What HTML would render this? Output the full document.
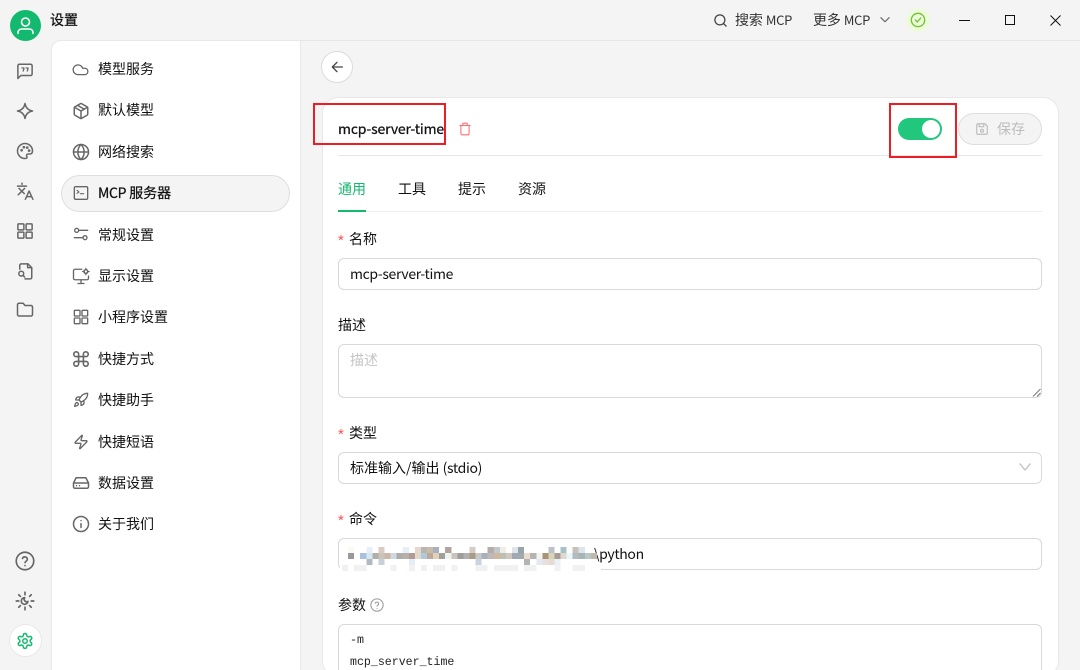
<!DOCTYPE html>
<html><head><meta charset="utf-8">
<style>
*{box-sizing:border-box;margin:0;padding:0}
html,body{width:1080px;height:670px;overflow:hidden;background:#f4f4f4}
body{position:relative;font-family:"Noto Sans CJK SC","Liberation Sans",sans-serif;font-size:14px;color:#111}
.a{position:absolute;white-space:nowrap}
.t{line-height:20px;height:20px}
.m{-webkit-text-stroke:.25px currentColor}
.l{letter-spacing:-.35px}
svg{position:absolute;fill:none;stroke:#666;stroke-width:2;stroke-linecap:round;stroke-linejoin:round}
.menu{position:absolute;left:51px;top:40px;width:250px;height:630px;background:#fff;border-left:1px solid #e8e8e8;border-top:1px solid #e8e8e8;border-right:1px solid #e8e8e8;border-top-left-radius:10px}
.input{position:absolute;left:338px;width:704px;border:1px solid #d9d9d9;border-radius:6px;background:#fff}
.star{color:#ff4d4f;font-size:15px;line-height:20px;font-family:"Liberation Sans",sans-serif}
</style></head><body>

<!-- top bar -->
<div class="a" style="left:60px;top:40px;width:1020px;height:1px;background:#e6e6e6"></div>
<div class="a" style="left:10px;top:10px;width:31px;height:31px;border-radius:50%;background:#13b96e"></div>
<svg style="left:15px;top:15px;stroke:#fff;stroke-width:1.8" width="21" height="21" viewBox="0 0 24 24"><circle cx="12" cy="8" r="4.6"/><path d="M3.5 21v-1.5a4 4 0 0 1 4-3.5h9a4 4 0 0 1 4 3.5V21"/></svg>
<div class="a t m" style="left:50px;top:10px">设置</div>

<svg style="left:713px;top:13px;stroke:#444" width="15" height="15" viewBox="0 0 24 24"><circle cx="11" cy="11" r="8"/><path d="m21 21-4.3-4.3"/></svg>
<div class="a t" style="left:735px;top:10px;color:#333;letter-spacing:-.1px">搜索 <span style="font-size:13px;letter-spacing:-.3px">MCP</span></div>
<div class="a t" style="left:813px;top:10px;color:#333;letter-spacing:-.1px">更多 <span style="font-size:13px;letter-spacing:-.3px">MCP</span></div>
<svg style="left:878px;top:13px;stroke:#666" width="14" height="14" viewBox="0 0 24 24"><path d="m5 8 7 7 7-7"/></svg>
<div class="a" style="left:906px;top:8px;width:24px;height:24px;border-radius:50%;background:#edfadc"></div>
<svg style="left:910px;top:12px;stroke:#6cc52d" width="16" height="16" viewBox="0 0 24 24"><circle cx="12" cy="12" r="10"/><path d="m8 12 3 3 5-6"/></svg>
<div class="a" style="left:959px;top:20px;width:11px;height:1px;background:#111"></div>
<div class="a" style="left:1005px;top:15px;width:10px;height:10px;border:1.2px solid #111"></div>
<svg style="left:1050px;top:15px;stroke:#111;stroke-width:1;stroke-linecap:butt" width="11" height="11" viewBox="0 0 11 11"><path d="M.5.5l10 10M10.5.5l-10 10"/></svg>

<!-- icon rail -->
<svg style="left:16px;top:62px" width="18" height="18" viewBox="0 0 24 24"><path d="M2.500 22V5a2 2 0 0 1 2-2h15a2 2 0 0 1 2 2v11a2 2 0 0 1-2 2H6.500z"/><path d="M8 8h2.500v1.500L9.500 12M13.500 8H16v1.500L15 12" stroke-width="1.700"/></svg>
<svg style="left:16px;top:102px" width="18" height="18" viewBox="0 0 24 24"><path d="M12 2c1 6 4 9 10 10-6 1-9 4-10 10-1-6-4-9-10-10 6-1 9-4 10-10z"/></svg>
<svg style="left:16px;top:142px" width="18" height="18" viewBox="0 0 24 24"><path d="M12 22a10 10 0 1 1 10-10c0 3-2 4-4 4h-2a2 2 0 0 0-1.500 3.300c.8 1 .2 2.700-2.500 2.700z"/><circle cx="7.500" cy="11" r=".8"/><circle cx="10.500" cy="7" r=".8"/><circle cx="15" cy="7.500" r=".8"/><circle cx="17.500" cy="11.500" r=".8"/></svg>
<svg style="left:16px;top:182px" width="18" height="18" viewBox="0 0 24 24"><path d="M8 1.500v1.500M2 5.500h12M4 8.500l7 7M11.500 8.500 3 17M12.500 23l5-11 5 11M14 19.500h7"/></svg>
<svg style="left:16px;top:222px" width="18" height="18" viewBox="0 0 24 24"><rect x="2.500" y="2.500" width="8" height="8" rx="1"/><rect x="13.500" y="2.500" width="8" height="8" rx="1"/><rect x="2.500" y="13.500" width="8" height="8" rx="1"/><rect x="13.500" y="13.500" width="8" height="8" rx="1"/></svg>
<svg style="left:16px;top:262px" width="18" height="18" viewBox="0 0 24 24"><path d="M5 9.500V4.500a2 2 0 0 1 2-2h9l5 5v13a2 2 0 0 1-2 2h-7"/><path d="M15.500 2.500v5h5.500"/><circle cx="7" cy="15.500" r="3.200"/><path d="m9.500 18 2 2"/></svg>
<svg style="left:16px;top:301px" width="18" height="18" viewBox="0 0 24 24"><path d="M4 20h16a2 2 0 0 0 2-2V8a2 2 0 0 0-2-2h-8L9.500 3H4a2 2 0 0 0-2 2v13a2 2 0 0 0 2 2z"/></svg>
<svg style="left:15px;top:551px" width="20" height="20" viewBox="0 0 24 24"><circle cx="12" cy="12" r="10.500"/><path d="M9 9a3 3 0 0 1 5.800 1c0 2-2.800 2.500-2.800 4"/><path d="M12 17.500h.01"/></svg>
<svg style="left:15px;top:591px" width="20" height="20" viewBox="0 0 24 24"><path d="M12 1.500v3M12 19.500v3M1.500 12h3M19.500 12h3M4.500 4.500l2 2M17.500 17.500l2 2M4.500 19.500l2-2M17.500 6.500l2-2"/><path d="M15.500 12.500a4 4 0 1 1-3.800-4.500 3 3 0 0 0 3.800 4.500z"/></svg>
<div class="a" style="left:9px;top:624px;width:33px;height:33px;border-radius:50%;background:#fff;border:1px solid #e8e8e8"></div>
<svg style="left:16px;top:632px;stroke:#13b96e" width="18" height="18" viewBox="0 0 24 24"><path d="M12.200 2h-.4a2 2 0 0 0-2 2v.2a2 2 0 0 1-1 1.700l-.4.300a2 2 0 0 1-2 0l-.2-.1a2 2 0 0 0-2.700.7l-.2.400a2 2 0 0 0 .7 2.700l.2.100a2 2 0 0 1 1 1.700v.5a2 2 0 0 1-1 1.700l-.2.100a2 2 0 0 0-.7 2.700l.2.400a2 2 0 0 0 2.700.7l.2-.1a2 2 0 0 1 2 0l.4.300a2 2 0 0 1 1 1.700v.2a2 2 0 0 0 2 2h.4a2 2 0 0 0 2-2v-.2a2 2 0 0 1 1-1.700l.4-.3a2 2 0 0 1 2 0l.2.100a2 2 0 0 0 2.700-.7l.2-.4a2 2 0 0 0-.7-2.700l-.2-.1a2 2 0 0 1-1-1.700v-.5a2 2 0 0 1 1-1.700l.2-.1a2 2 0 0 0 .7-2.700l-.2-.4a2 2 0 0 0-2.700-.7l-.2.100a2 2 0 0 1-2 0l-.4-.3a2 2 0 0 1-1-1.700V4a2 2 0 0 0-2-2z"/><circle cx="12" cy="12" r="3"/></svg>

<!-- menu panel -->
<div class="menu"></div>
<div class="a" style="left:61px;top:175px;width:229px;height:37px;border-radius:19px;background:#f4f4f4;border:1px solid #dedede"></div>

<svg style="left:72px;top:60px" width="18" height="18" viewBox="0 0 24 24"><path d="M17.500 19.500H8a6.500 6.500 0 1 1 6.200-8.500h3.300a4.300 4.300 0 0 1 0 8.500z" stroke-width="1.700"/></svg>
<div class="a t" style="left:98px;top:59px">模型服务</div>
<svg style="left:72px;top:102px" width="18" height="18" viewBox="0 0 24 24" stroke-width="1.800"><path d="M21 8a2 2 0 0 0-1-1.700l-7-4a2 2 0 0 0-2 0l-7 4A2 2 0 0 0 3 8v8a2 2 0 0 0 1 1.700l7 4a2 2 0 0 0 2 0l7-4a2 2 0 0 0 1-1.700z"/><path d="m3.300 7 8.700 5 8.700-5M12 22V12M7.500 4.500l9 5.200"/></svg>
<div class="a t" style="left:98px;top:100px">默认模型</div>
<svg style="left:72px;top:143px" width="18" height="18" viewBox="0 0 24 24"><circle cx="12" cy="12" r="10"/><path d="M2 12h20M12 2a14 14 0 0 0 0 20 14 14 0 0 0 0-20z"/></svg>
<div class="a t" style="left:98px;top:142px">网络搜索</div>
<svg style="left:73px;top:185px" width="16" height="16" viewBox="0 0 24 24" stroke-width="2"><rect x="2" y="2.500" width="20" height="19" rx="2"/><path d="m6 8 3 2.500L6 12.500M11 13h5" stroke-width="1.600"/></svg>
<div class="a t m" style="left:98px;top:183px;letter-spacing:-.05px"><span class="l">MCP</span> 服务器</div>
<svg style="left:73px;top:226px" width="16" height="16" viewBox="0 0 24 24"><circle cx="5.500" cy="6.500" r="3"/><circle cx="18" cy="17.500" r="3"/><path d="M9 6.500h13M2 17.500h13"/></svg>
<div class="a t" style="left:98px;top:225px">常规设置</div>
<svg style="left:72px;top:267px" width="18" height="18" viewBox="0 0 24 24"><path d="M13 3H4a2 2 0 0 0-2 2v10a2 2 0 0 0 2 2h16a2 2 0 0 0 2-2v-3M12 17v5M8 22h8" stroke-width="1.800"/><circle cx="18.500" cy="6" r="2.500"/><path d="M18.500 1.500v1.500M18.500 9v1.500M14 6h1.500M21.500 6H23" stroke-width="1.500"/></svg>
<div class="a t" style="left:98px;top:266px">显示设置</div>
<svg style="left:73px;top:309px" width="16" height="16" viewBox="0 0 24 24"><rect x="2" y="2" width="8.500" height="8.500" rx="1"/><rect x="13.500" y="2" width="8.500" height="8.500" rx="1"/><rect x="2" y="13.500" width="8.500" height="8.500" rx="1"/><rect x="13.500" y="13.500" width="8.500" height="8.500" rx="1"/></svg>
<div class="a t" style="left:98px;top:307px">小程序设置</div>
<svg style="left:73px;top:351px" width="16" height="16" viewBox="2 2 20 20" stroke-width="2"><path d="M15 6v12a3 3 0 1 0 3-3H6a3 3 0 1 0 3 3V6a3 3 0 1 0-3 3h12a3 3 0 1 0-3-3"/></svg>
<div class="a t" style="left:98px;top:349px">快捷方式</div>
<svg style="left:73px;top:392px" width="16" height="16" viewBox="0 0 24 24"><path d="M4.500 16.500c-1.500 1.300-2 5-2 5s3.700-.5 5-2c.7-.8.700-2.100-.1-2.900a2.200 2.200 0 0 0-2.900-.1z"/><path d="m12 15-3-3a22 22 0 0 1 2-4A12.900 12.900 0 0 1 22 2c0 2.700-.8 7.500-6 11a22.400 22.400 0 0 1-4 2z"/><path d="M9 12H4s.5-3 2-4c1.600-1.100 5 0 5 0M12 15v5s3-.5 4-2c1.100-1.600 0-5 0-5"/></svg>
<div class="a t" style="left:98px;top:390px">快捷助手</div>
<svg style="left:73px;top:434px" width="16" height="16" viewBox="0 0 24 24"><path d="M4 14a1 1 0 0 1-.8-1.600l9.900-10.200a.5.500 0 0 1 .9.500l-1.900 6A1 1 0 0 0 13 10h7a1 1 0 0 1 .8 1.600l-9.900 10.200a.5.500 0 0 1-.9-.5l1.900-6A1 1 0 0 0 11 14z"/></svg>
<div class="a t" style="left:98px;top:432px">快捷短语</div>
<svg style="left:72px;top:474px" width="18" height="18" viewBox="0 0 24 24"><path d="M2 12h20M5.500 5h13L22 12v5a2 2 0 0 1-2 2H4a2 2 0 0 1-2-2v-5z"/><path d="M6 15.500h.01M10 15.500h.01"/></svg>
<div class="a t" style="left:98px;top:473px">数据设置</div>
<svg style="left:72px;top:515px" width="18" height="18" viewBox="0 0 24 24"><circle cx="12" cy="12" r="10"/><path d="M12 16.500v-5M12 7.500h.01"/></svg>
<div class="a t" style="left:98px;top:514px">关于我们</div>

<!-- back button -->
<div class="a" style="left:321px;top:51px;width:32px;height:32px;border-radius:50%;background:#fff;border:1px solid #dcdcdc"></div>
<svg style="left:329px;top:59px;stroke:#444" width="16" height="16" viewBox="0 0 24 24"><path d="M12 19 5 12l7-7M5 12h15"/></svg>

<!-- card -->
<div class="a" style="left:322px;top:97px;width:737px;height:580px;background:#fff;border:1px solid #e8e8e8;border-radius:16px"></div>
<div class="a t m" style="left:338px;top:119px;letter-spacing:-.15px">mcp-server-time</div>
<svg style="left:458px;top:122px;stroke:#ff6b6f;stroke-width:1.800" width="14" height="14" viewBox="0 0 24 24"><path d="M3 6h18M19 6v14a2 2 0 0 1-2 2H7a2 2 0 0 1-2-2V6M8 6V4a2 2 0 0 1 2-2h4a2 2 0 0 1 2 2v2"/></svg>
<div class="a" style="left:898px;top:118px;width:44px;height:22px;border-radius:11px;background:#20c77c"></div>
<div class="a" style="left:922px;top:120px;width:18px;height:18px;border-radius:50%;background:#fff"></div>
<div class="a" style="left:958px;top:113px;width:84px;height:32px;border-radius:16px;background:#f4f4f4;border:1px solid #dedede"></div>
<svg style="left:975px;top:122px;stroke:#bdbdbd" width="14" height="14" viewBox="0 0 24 24"><path d="M5 3h12l4 4v12a2 2 0 0 1-2 2H5a2 2 0 0 1-2-2V5a2 2 0 0 1 2-2z"/><path d="M7 3v5h8V3"/><circle cx="12" cy="15" r="2.500"/></svg>
<div class="a t" style="left:997px;top:119px;color:#bdbdbd">保存</div>
<div class="a" style="left:338px;top:155px;width:704px;height:1px;background:#e6e6e6"></div>

<div class="a t" style="left:338px;top:179px;color:#13b96e">通用</div>
<div class="a t" style="left:398px;top:179px">工具</div>
<div class="a t" style="left:458px;top:179px">提示</div>
<div class="a t" style="left:518px;top:179px">资源</div>
<div class="a" style="left:338px;top:211px;width:704px;height:1px;background:#eee"></div>
<div class="a" style="left:338px;top:210px;width:28px;height:2px;background:#13b96e"></div>

<div class="a star" style="left:338px;top:231px">*</div>
<div class="a t" style="left:349px;top:229px">名称</div>
<div class="input" style="top:258px;height:32px"></div>
<div class="a t l" style="left:350px;top:264px">mcp-server-time</div>

<div class="a t" style="left:338px;top:315px">描述</div>
<div class="input" style="top:344px;height:54px"></div>
<div class="a t" style="left:350px;top:350px;color:#c4c4c4">描述</div>
<svg style="left:1032px;top:388px;stroke:#777;stroke-width:1;stroke-linecap:butt" width="9" height="9" viewBox="0 0 9 9"><path d="M1 8.500 8.500 1M5 8.500 8.500 5"/></svg>

<div class="a star" style="left:338px;top:425px">*</div>
<div class="a t" style="left:349px;top:423px">类型</div>
<div class="input" style="top:452px;height:32px"></div>
<div class="a t" style="left:350px;top:458px">标准输入/输出 <span class="l">(stdio)</span></div>
<svg style="left:1019px;top:461px;stroke:#c8c8c8;stroke-width:1.500" width="12" height="12" viewBox="0 0 12 12"><path d="M1 3l5 6 5-6"/></svg>

<div class="a star" style="left:338px;top:511px">*</div>
<div class="a t" style="left:349px;top:509px">命令</div>
<div class="input" style="top:538px;height:32px"></div>
<div class="a t l" style="left:594px;top:544px">\python</div>
<svg style="position:absolute;left:340px;top:547px;stroke:none;stroke-width:0" width="261" height="24" viewBox="0 0 258 24" preserveAspectRatio="none" shape-rendering="crispEdges">
<g>
<rect x="8" y="0" width="6" height="6" fill="#fbfaf2"/><rect x="26" y="0" width="6" height="6" fill="#e8eef4"/><rect x="38" y="0" width="6" height="6" fill="#d8ccc4"/><rect x="62" y="0" width="6" height="6" fill="#e4f2f8"/><rect x="74" y="0" width="6" height="6" fill="#e2d8d0"/><rect x="80" y="0" width="6" height="6" fill="#b8b4ae"/><rect x="86" y="0" width="6" height="6" fill="#c8bca8"/><rect x="92" y="0" width="6" height="6" fill="#a8b0c0"/><rect x="104" y="0" width="6" height="6" fill="#b0a49c"/><rect x="128" y="0" width="6" height="6" fill="#d4ccc4"/><rect x="146" y="0" width="6" height="6" fill="#b4aca8"/><rect x="152" y="0" width="6" height="6" fill="#c0c8d0"/><rect x="158" y="0" width="6" height="6" fill="#f0eee4"/><rect x="170" y="0" width="6" height="6" fill="#dce4ec"/><rect x="176" y="0" width="6" height="6" fill="#98a4a8"/><rect x="206" y="0" width="6" height="6" fill="#bcc0c8"/><rect x="218" y="0" width="6" height="6" fill="#a8c0c8"/><rect x="230" y="0" width="6" height="6" fill="#c8c0b8"/><rect x="236" y="0" width="6" height="6" fill="#dce4ec"/>
</g>
<g>
<rect x="8" y="6" width="6" height="6" fill="#999"/><rect x="20" y="6" width="6" height="6" fill="#a8c0dc"/><rect x="26" y="6" width="6" height="6" fill="#d4e8f4"/><rect x="32" y="6" width="6" height="6" fill="#b0b0a8"/><rect x="38" y="6" width="6" height="6" fill="#ccc4b8"/><rect x="44" y="6" width="6" height="6" fill="#c8b8a8"/><rect x="50" y="6" width="6" height="6" fill="#d0d8e0"/><rect x="56" y="6" width="6" height="6" fill="#acacac"/><rect x="62" y="6" width="6" height="6" fill="#b8b0a8"/><rect x="68" y="6" width="6" height="6" fill="#b09c94"/><rect x="74" y="6" width="6" height="6" fill="#e4d8c8"/><rect x="80" y="6" width="6" height="6" fill="#b0c8dc"/><rect x="86" y="6" width="6" height="6" fill="#c0a898"/><rect x="92" y="6" width="6" height="6" fill="#e0d0b8"/><rect x="98" y="6" width="6" height="6" fill="#a0a098"/><rect x="104" y="6" width="6" height="6" fill="#f0f4f0"/><rect x="110" y="6" width="6" height="6" fill="#ccc4bc"/><rect x="116" y="6" width="6" height="6" fill="#a09c9c"/><rect x="122" y="6" width="6" height="6" fill="#b0b0b0"/><rect x="128" y="6" width="6" height="6" fill="#a89c88"/><rect x="134" y="6" width="6" height="6" fill="#c8c8c8"/><rect x="140" y="6" width="6" height="6" fill="#a8b0bc"/><rect x="146" y="6" width="6" height="6" fill="#c0b8b8"/><rect x="152" y="6" width="6" height="6" fill="#d0b8a0"/><rect x="158" y="6" width="6" height="6" fill="#bcc0b0"/><rect x="164" y="6" width="6" height="6" fill="#d0c8c0"/><rect x="170" y="6" width="6" height="6" fill="#a0a8b4"/><rect x="176" y="6" width="6" height="6" fill="#a0a8b0"/><rect x="182" y="6" width="6" height="6" fill="#ecdccc"/><rect x="188" y="6" width="6" height="6" fill="#b4b4b4"/><rect x="194" y="6" width="6" height="6" fill="#f4f4ec"/><rect x="200" y="6" width="6" height="6" fill="#a89478"/><rect x="206" y="6" width="6" height="6" fill="#d8d4b8"/><rect x="212" y="6" width="6" height="6" fill="#a89c98"/><rect x="218" y="6" width="6" height="6" fill="#e0d8cc"/><rect x="224" y="6" width="6" height="6" fill="#e8f8f8"/><rect x="230" y="6" width="6" height="6" fill="#b0bcc0"/><rect x="236" y="6" width="6" height="6" fill="#a8b4b8"/><rect x="242" y="6" width="6" height="6" fill="#b8c8c8"/><rect x="248" y="6" width="6" height="6" fill="#c0b8a8"/>
</g>
<g>
<rect x="26" y="12" width="6" height="6" fill="#b4b8c4"/><rect x="38" y="12" width="6" height="6" fill="#c8d0d8"/><rect x="68" y="12" width="6" height="6" fill="#e4ecf8"/><rect x="134" y="12" width="6" height="6" fill="#c8d4e0"/><rect x="182" y="12" width="6" height="6" fill="#b4b4b4"/><rect x="194" y="12" width="6" height="6" fill="#e4e8f0"/><rect x="200" y="12" width="6" height="6" fill="#e8e0e0"/><rect x="206" y="12" width="6" height="6" fill="#e4dcd0"/><rect x="212" y="12" width="6" height="6" fill="#e8f0f8"/>
</g>
<g fill="#f1f1f1">
<rect x="0" y="18" width="258" height="6" fill="#fff"/>
<rect x="2" y="18" width="6" height="6"/><rect x="14" y="18" width="12" height="6"/><rect x="50" y="18" width="6" height="6"/><rect x="68" y="18" width="6" height="6"/><rect x="80" y="18" width="6" height="6"/><rect x="92" y="18" width="12" height="6"/><rect x="110" y="18" width="6" height="6"/><rect x="134" y="18" width="12" height="6"/><rect x="152" y="18" width="24" height="6"/><rect x="182" y="18" width="12" height="6"/><rect x="212" y="18" width="6" height="6"/><rect x="230" y="18" width="12" height="6"/>
</g>
</svg>

<div class="a t" style="left:338px;top:595px">参数</div>
<svg style="left:370px;top:598px;stroke:#999;stroke-width:1.800" width="14" height="14" viewBox="0 0 24 24"><circle cx="12" cy="12" r="10.500"/><path d="M9 9a3 3 0 0 1 5.800 1c0 2-2.800 2.500-2.800 4M12 18h.01"/></svg>
<div class="input" style="top:624px;height:60px"></div>
<div class="a" style="left:350px;top:634px;font-family:'Liberation Mono',monospace;font-size:11.600px;line-height:14px;color:#222">-m</div>
<div class="a" style="left:350px;top:656px;font-family:'Liberation Mono',monospace;font-size:11.600px;line-height:14px;color:#222">mcp_server_time</div>

<!-- red annotation boxes -->
<div class="a" style="left:313px;top:103px;width:133px;height:42px;border:2px solid #ee1c25"></div>
<div class="a" style="left:889px;top:103px;width:68px;height:55px;border:2px solid #ee1c25"></div>
</body></html>
